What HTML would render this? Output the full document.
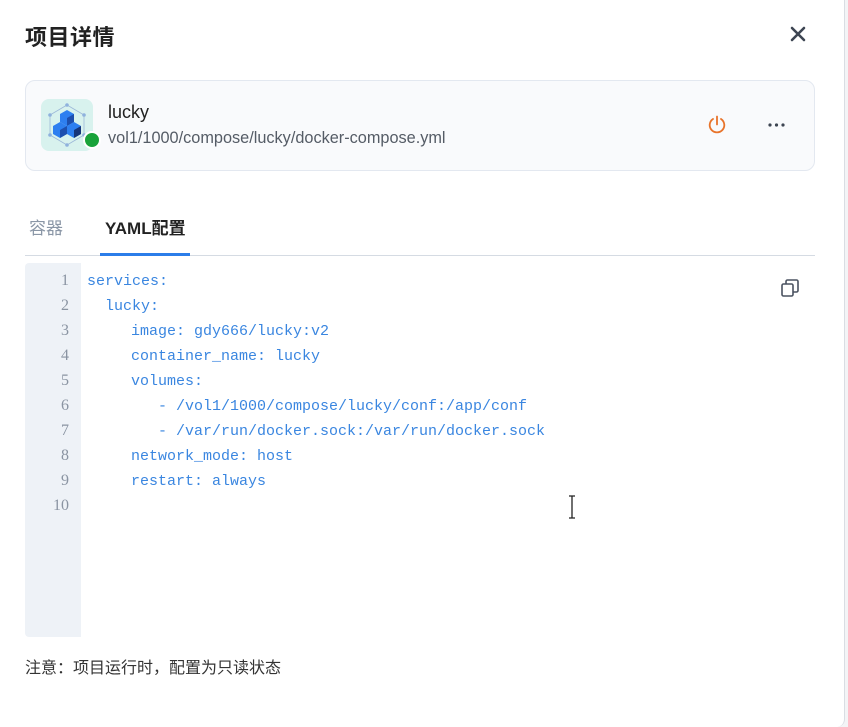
<!DOCTYPE html>
<html><head><meta charset="utf-8">
<style>
*{margin:0;padding:0;box-sizing:border-box}
body{width:848px;height:727px;background:#f3f4f6;font-family:"Liberation Sans","Noto Sans CJK SC",sans-serif;position:relative;overflow:hidden}
.panel{position:absolute;left:0;top:0;width:845px;height:727px;background:#fff;border-right:1px solid #d9dde3;border-bottom-right-radius:8px}
.title{position:absolute;left:25px;top:20px;font-size:22px;font-weight:bold;color:#222;letter-spacing:0.5px}
.close{position:absolute;left:788px;top:24px}
.card{position:absolute;left:25px;top:80px;width:790px;height:91px;background:#f9fafc;border:1px solid #e3e8f0;border-radius:10px}
.logo{position:absolute;left:41px;top:99px;width:52px;height:52px;background:#d8f2ee;border-radius:8px}
.dot{position:absolute;left:83px;top:131px;width:18px;height:18px;border-radius:50%;background:#19a33a;border:2px solid #fff}
.name{position:absolute;left:108px;top:102px;font-size:18px;color:#222}
.path{position:absolute;left:108px;top:129px;font-size:16.3px;color:#555c66}
.tab1{position:absolute;left:29px;top:214px;font-size:17px;color:#8a96a6}
.tab2{position:absolute;left:105px;top:214px;font-size:17px;color:#222;font-weight:bold}
.tabline{position:absolute;left:25px;top:255px;width:790px;height:1px;background:#d5dbe3}
.tabact{position:absolute;left:100px;top:253px;width:90px;height:3px;background:#2b7de9}
.gutter{position:absolute;left:25px;top:263px;width:56px;height:374px;background:#eef2f7;border-radius:4px 0 0 4px}
.ln{position:absolute;left:25px;width:44px;text-align:right;font-family:"Liberation Serif","Noto Serif CJK SC",serif;font-size:16px;color:#8a94a2}
.code{position:absolute;font-family:"Liberation Mono","Noto Serif CJK SC",monospace;font-size:15px;color:#3a86e0;white-space:pre}
.note{position:absolute;left:25px;top:654px;font-size:16px;color:#333}
</style></head><body>
<div class="panel"></div>
<div class="title">项目详情</div>
<svg class="close" width="20" height="20" viewBox="0 0 20 20"><path d="M4 4L16 16M16 4L4 16" stroke="#3d4552" stroke-width="2.6" stroke-linecap="round"/></svg>
<div class="card"></div>
<div class="logo">
<svg width="52" height="52" viewBox="0 0 52 52">
<polygon points="26,6 43,16 43,36 26,46 9,36 9,16" fill="none" stroke="#9cb8d8" stroke-width="0.8"/>
<g fill="#8fb2dd"><circle cx="26" cy="6" r="1.8"/><circle cx="43" cy="16" r="1.8"/><circle cx="43" cy="36" r="1.8"/><circle cx="26" cy="46" r="1.8"/><circle cx="9" cy="36" r="1.8"/><circle cx="9" cy="16" r="1.8"/></g>
<polygon points="26,11 33,15 33,23 26,27 19,23 19,15" fill="#2d7ff0"/><polygon points="26,19 33,15 33,23 26,27" fill="#1d4fae"/>
<polygon points="19,23 26,27 26,35 19,39 12,35 12,27" fill="#2d7ff0"/><polygon points="19,31 26,27 26,35 19,39" fill="#1d4fae"/>
<polygon points="33,23 40,27 40,35 33,39 26,35 26,27" fill="#2d7ff0"/><polygon points="33,31 40,27 40,35 33,39" fill="#16367a"/>
</svg></div>
<div class="dot"></div>
<div class="name">lucky</div>
<div class="path">vol1/1000/compose/lucky/docker-compose.yml</div>
<svg style="position:absolute;left:706px;top:114px" width="22" height="22" viewBox="0 0 22 22"><path d="M7 5A7.3 7.3 0 1 0 15 5" fill="none" stroke="#e8732a" stroke-width="1.8" stroke-linecap="round"/><path d="M11 2.5V10.5" stroke="#e8732a" stroke-width="1.8" stroke-linecap="round"/></svg>
<svg style="position:absolute;left:767px;top:121px" width="20" height="8"><circle cx="3" cy="4" r="1.6" fill="#3d4552"/><circle cx="9.5" cy="4" r="1.6" fill="#3d4552"/><circle cx="16" cy="4" r="1.6" fill="#3d4552"/></svg>
<div class="tab1">容器</div>
<div class="tab2">YAML配置</div>
<div class="tabline"></div><div class="tabact"></div>
<div class="gutter"></div>
<svg style="position:absolute;left:780px;top:278px" width="20" height="20" viewBox="0 0 20 20"><rect x="2" y="6" width="11" height="12" rx="1.5" fill="none" stroke="#4a5260" stroke-width="1.6"/><path d="M6 6V3.5A1.5 1.5 0 0 1 7.5 2H16.5A1.5 1.5 0 0 1 18 3.5V12.5A1.5 1.5 0 0 1 16.5 14H13" fill="none" stroke="#4a5260" stroke-width="1.6"/></svg>
<div class="ln" style="top:272px">1</div>
<div class="ln" style="top:297px">2</div>
<div class="ln" style="top:322px">3</div>
<div class="ln" style="top:347px">4</div>
<div class="ln" style="top:372px">5</div>
<div class="ln" style="top:397px">6</div>
<div class="ln" style="top:422px">7</div>
<div class="ln" style="top:447px">8</div>
<div class="ln" style="top:472px">9</div>
<div class="ln" style="top:497px">10</div>
<div class="code" style="left:87px;top:273px">services:</div>
<div class="code" style="left:105px;top:298px">lucky:</div>
<div class="code" style="left:131px;top:323px">image: gdy666/lucky:v2</div>
<div class="code" style="left:131px;top:348px">container_name: lucky</div>
<div class="code" style="left:131px;top:373px">volumes:</div>
<div class="code" style="left:158px;top:398px">- /vol1/1000/compose/lucky/conf:/app/conf</div>
<div class="code" style="left:158px;top:423px">- /var/run/docker.sock:/var/run/docker.sock</div>
<div class="code" style="left:131px;top:448px">network_mode: host</div>
<div class="code" style="left:131px;top:473px">restart: always</div>
<svg style="position:absolute;left:567px;top:495px" width="10" height="24"><path d="M2 1H8M5 1V23M2 23H8" stroke="#222" stroke-width="1.3"/></svg>
<div class="note">注意：项目运行时，配置为只读状态</div>
</body></html>
